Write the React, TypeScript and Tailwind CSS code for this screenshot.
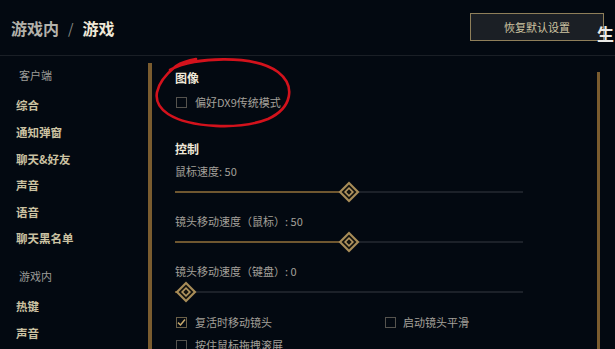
import React from "react";

const Knob = () => (
  <svg width="22" height="22" viewBox="0 0 22 22">
    <polygon points="11,0.5 21.5,11 11,21.5 0.5,11" fill="#a88d58" />
    <polygon points="11,3.5 18.5,11 11,18.5 3.5,11" fill="#14140f" />
    <polygon points="11,6 16,11 11,16 6,11" fill="#b39660" />
    <polygon points="11,8.3 13.7,11 11,13.7 8.3,11" fill="#14140f" />
  </svg>
);

const Slider = ({ pct }: { pct: number }) => {
  const w = 348;
  const k = 22;
  const center = k / 2 + (pct / 100) * (w - k);
  return (
    <div className="relative w-[348px] h-[22px]">
      <div className="absolute left-0 right-0 top-[10px] h-[2px] bg-[#1c2129]" />
      <div className="absolute left-0 top-[10px] h-[2px] bg-[#6f5730]" style={{ width: center }} />
      <div className="absolute top-0" style={{ left: center - k / 2 }}>
        <Knob />
      </div>
    </div>
  );
};

const Check = ({ checked }: { checked?: boolean }) => (
  <div className={`w-[11px] h-[11px] border flex items-center justify-center ${checked ? "border-[#6b6048]" : "border-[#55534e]"}`}>
    {checked && (
      <svg width="9" height="9" viewBox="0 0 9 9">
        <path d="M1 4.6 L3.5 7 L8 1.5" stroke="#c8aa6e" strokeWidth="1.5" fill="none" />
      </svg>
    )}
  </div>
);

const NavItem = ({ children }: { children: React.ReactNode }) => (
  <div className="h-[26.6px] flex items-center pl-[16px] text-[11.5px] font-bold text-[#cbc2a2]">{children}</div>
);

export default function App() {
  return (
    <div className="relative w-[615px] h-[349px] overflow-hidden bg-[#030911] font-['Noto_Sans_CJK_SC',sans-serif]">
      <div className="h-[56px] border-b border-[#1a1f26] flex items-center justify-between pl-[11px] pr-[11px]">
        <div className="text-[16px] font-bold leading-[20px] flex items-center">
          <span className="text-[#b3b2ab]">游戏内</span>
          <span className="text-[#8a8a85] mx-[9px] font-normal text-[14px]">/</span>
          <span className="text-[#efe8d8]">游戏</span>
        </div>
        <div className="w-[134px] h-[28px] mb-[1px] border border-[#8f7f5a] bg-[#1b1f25] flex items-center justify-center text-[11px] text-[#cfc5a3]">
          恢复默认设置
        </div>
      </div>
      <div className="absolute left-[597px] top-[23px] text-[17px] font-bold text-[#e9e9e6] leading-[22px]">生</div>

      <div className="flex h-[293px]">
        <div className="w-[148px] pt-[11px]">
          <div className="h-[16px] leading-[16px] pl-[19px] text-[11px] text-[#9d9c98] mb-[9.7px]">客户端</div>
          <NavItem>综合</NavItem>
          <NavItem>通知弹窗</NavItem>
          <NavItem>聊天&amp;好友</NavItem>
          <NavItem>声音</NavItem>
          <NavItem>语音</NavItem>
          <NavItem>聊天黑名单</NavItem>
          <div className="h-[16px] leading-[16px] pl-[19px] text-[11px] text-[#9d9c98] mt-[16px] mb-[9.2px]">游戏内</div>
          <NavItem>热键</NavItem>
          <NavItem>声音</NavItem>
        </div>
        <div className="w-[4px] mt-[7px] bg-[#7a5c2f]" />
        <div className="flex-1 pl-[23px] pt-[14px] text-[11px] text-[#a3a09a]">
          <div className="h-[16px] leading-[16px] text-[12px] font-bold text-[#efe8d8]">图像</div>
          <div className="h-[16px] mt-[8px] flex items-center">
            <div className="ml-[1px]"><Check /></div>
            <span className="ml-[8px] leading-[16px]">偏好DX9传统模式</span>
          </div>
          <div className="h-[16px] mt-[31px] leading-[16px] text-[12px] font-bold text-[#efe8d8]">控制</div>
          <div className="h-[16px] mt-[6px] leading-[16px]">鼠标速度: 50</div>
          <div className="mt-[2px]"><Slider pct={50} /></div>
          <div className="h-[16px] mt-[10px] leading-[16px]">镜头移动速度（鼠标）: 50</div>
          <div className="mt-[2px]"><Slider pct={50} /></div>
          <div className="h-[16px] mt-[10px] leading-[16px]">镜头移动速度（键盘）: 0</div>
          <div className="mt-[2px]"><Slider pct={0} /></div>
          <div className="h-[16px] mt-[11px] flex items-center">
            <div className="w-[210px] flex items-center">
              <div className="ml-[1px]"><Check checked /></div>
              <span className="ml-[8px] leading-[16px]">复活时移动镜头</span>
            </div>
            <div className="flex items-center">
              <Check />
              <span className="ml-[7px] leading-[16px]">启动镜头平滑</span>
            </div>
          </div>
          <div className="h-[16px] mt-[7px] flex items-center">
            <div className="ml-[1px]"><Check /></div>
            <span className="ml-[8px] leading-[16px]">按住鼠标拖拽滚屏</span>
          </div>
        </div>
        <div className="w-[3px] mt-[16px] bg-[#7a5c2f]" />
        <div className="w-[15px]" />
      </div>

      <svg className="absolute left-0 top-0 pointer-events-none" width="615" height="349">
        <path
          d="M170 70 C 195 56, 255 55, 278 72 C 296 86, 292 108, 268 119 C 240 130, 190 128, 168 114 C 150 102, 154 84, 176 66 C 182 62, 190 60, 196 59"
          stroke="#d3121c"
          strokeWidth="2.6"
          fill="none"
          strokeLinecap="round"
        />
      </svg>
    </div>
  );
}
